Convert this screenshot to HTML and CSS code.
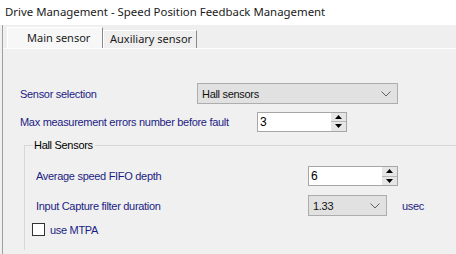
FILE: index.html
```html
<!DOCTYPE html>
<html lang="en">
<head>
    <meta charset="UTF-8">
    <title>Drive Management - Speed Position Feedback Management</title>
    <link rel="stylesheet" href="styles.css">
</head>
<body>
    <div class="title-bar">Drive Management - Speed Position Feedback Management</div>
    <div class="window">
        <div class="tabs">
            <div class="tab active">Main sensor</div>
            <div class="tab">Auxiliary sensor</div>
        </div>
        <div class="panel">
            <div class="row row-sensor">
                <span class="label">Sensor selection</span>
                <div class="combo combo-wide">
                    <span>Hall sensors</span>
                    <svg class="chevron" width="10" height="6" viewBox="0 0 10 6"><path d="M0.5 0.5 L5 5 L9.5 0.5" fill="none" stroke="#606060" stroke-width="1"/></svg>
                </div>
            </div>
            <div class="row row-errors">
                <span class="label">Max measurement errors number before fault</span>
                <div class="spin">
                    <span class="spin-value">3</span>
                    <div class="spin-buttons">
                        <div class="spin-btn"><svg width="7" height="4" viewBox="0 0 7 4"><path d="M0 4 L3.5 0 L7 4 Z" fill="#000"/></svg></div>
                        <div class="spin-btn"><svg width="7" height="4" viewBox="0 0 7 4"><path d="M0 0 L3.5 4 L7 0 Z" fill="#000"/></svg></div>
                    </div>
                </div>
            </div>

            <fieldset class="group">
                <legend>Hall Sensors</legend>
                <div class="row row-fifo">
                    <span class="label">Average speed FIFO depth</span>
                    <div class="spin">
                        <span class="spin-value">6</span>
                        <div class="spin-buttons">
                            <div class="spin-btn"><svg width="7" height="4" viewBox="0 0 7 4"><path d="M0 4 L3.5 0 L7 4 Z" fill="#000"/></svg></div>
                            <div class="spin-btn"><svg width="7" height="4" viewBox="0 0 7 4"><path d="M0 0 L3.5 4 L7 0 Z" fill="#000"/></svg></div>
                        </div>
                    </div>
                </div>
                <div class="row row-filter">
                    <span class="label">Input Capture filter duration</span>
                    <div class="combo combo-small">
                        <span>1.33</span>
                        <svg class="chevron" width="10" height="6" viewBox="0 0 10 6"><path d="M0.5 0.5 L5 5 L9.5 0.5" fill="none" stroke="#606060" stroke-width="1"/></svg>
                    </div>
                    <span class="unit">usec</span>
                </div>
                <label class="check">
                    <span class="box"></span>
                    <span>use MTPA</span>
                </label>
            </fieldset>
        </div>
    </div>
</body>
</html>
```

FILE: styles.css
```css
body {
    margin: 0;
    background-color: #f0f0f0;
    font-family: "Liberation Sans", Arial, sans-serif;
    font-size: 11px;
    letter-spacing: -0.3px;
    color: #000;
    overflow: hidden;
}

.title-bar {
    background-color: #fff;
    height: 25px;
    line-height: 24px;
    padding-left: 5px;
    font-family: "Noto Sans", "Open Sans", sans-serif;
    font-size: 11.4px;
    letter-spacing: 0;
    color: #1a1a1a;
}

.window {
    box-sizing: border-box;
    border-left: 1px solid #a0a0a0;
    margin-left: 2px;
    height: 229px;
    overflow: hidden;
}

.tabs {
    display: flex;
    align-items: flex-end;
    height: 23px;
    padding-left: 4px;
    border-bottom: 1px solid #fdfdfd;
    background-color: #efefef;
}

.tab {
    font-family: "Noto Sans", "Open Sans", sans-serif;
    font-size: 11px;
    letter-spacing: 0;
    height: 17px;
    line-height: 16px;
    padding: 0 4px 0 6px;
    border-left: 1px solid #fff;
    border-right: 1px solid #8a8a8a;
    border-top: 1px solid #fff;
    color: #1a1a1a;
}

.tab.active {
    box-sizing: border-box;
    height: 21px;
    line-height: 19px;
    width: 96px;
    padding-left: 19px;
    background-color: #f7f7f7;
}

.panel {
    padding: 34px 0 0 17px;
}

.row {
    display: flex;
    align-items: center;
}

.label {
    color: #1c1c84;
}

.row-sensor {
    height: 21px;
}

.row-sensor .label {
    width: 177px;
}

.row-errors {
    height: 19px;
    margin-top: 8px;
}

.row-errors .label {
    width: 237px;
}

.combo {
    box-sizing: border-box;
    display: flex;
    align-items: center;
    justify-content: space-between;
    background-color: #e1e1e1;
    border: 1px solid #adadad;
    padding: 0 6px 0 4px;
    color: #111;
}

.combo-wide {
    width: 201px;
    height: 21px;
}

.combo-small {
    width: 79px;
    height: 21px;
}

.spin {
    box-sizing: border-box;
    display: flex;
    align-items: center;
    justify-content: space-between;
    width: 90px;
    height: 20px;
    background-color: #fff;
    border: 1px solid #a6a6a6;
    font-size: 12px;
}

.spin-value {
    padding-left: 2px;
}

.spin-buttons {
    display: flex;
    flex-direction: column;
    gap: 1px;
    width: 15px;
    height: 18px;
    background-color: #b8b8b8;
    border-left: 1px solid #fff;
}

.spin-btn {
    flex: 1;
    display: flex;
    align-items: center;
    justify-content: center;
    background-color: #e6e6e6;
}

.group {
    margin: 8px 0 0 4px;
    padding: 15px 0 14px 11px;
    border: 1px solid #d8d8d8;
    border-right: none;
    border-bottom: none;
}

.group legend {
    padding: 0 2px 0 1px;
    margin-left: -3px;
    color: #000;
}

.row-fifo {
    height: 20px;
}

.row-fifo .label,
.row-filter .label {
    width: 272px;
}

.row-filter {
    height: 21px;
    margin-top: 9px;
}

.unit {
    margin-left: 15px;
    color: #1c1c84;
    padding-top: 1px;
}

.check {
    display: flex;
    align-items: center;
    gap: 5px;
    margin-top: 7px;
    margin-left: -4px;
    color: #1c1c84;
}

.box {
    box-sizing: border-box;
    width: 13px;
    height: 13px;
    background-color: #fff;
    border: 1px solid #333;
}
```
